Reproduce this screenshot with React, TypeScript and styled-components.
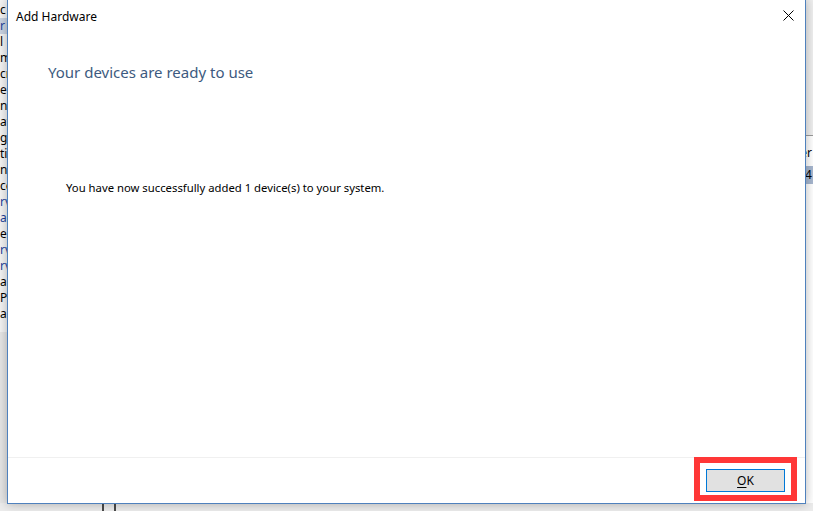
import React from 'react';
import styled, { createGlobalStyle } from 'styled-components';

const GlobalStyle = createGlobalStyle`
	html, body {
		margin: 0;
		padding: 0;
		width: 813px;
		height: 511px;
		overflow: hidden;
		background: #e6e6e6;
		font-family: 'Noto Sans', 'Open Sans', 'Liberation Sans', sans-serif;
	}
`;

const listRows = [
	{ text: 'c', color: '#000' },
	{ text: 'r', color: '#1b3f9b', selected: true },
	{ text: 'l', color: '#000' },
	{ text: 'm', color: '#000' },
	{ text: 'cr', color: '#000' },
	{ text: 'er', color: '#000' },
	{ text: 'ne', color: '#000' },
	{ text: 'at', color: '#000' },
	{ text: 'g', color: '#000' },
	{ text: 'ti', color: '#000' },
	{ text: 'ni', color: '#000' },
	{ text: 'ce', color: '#000' },
	{ text: 'rv', color: '#1b3f9b' },
	{ text: 'as', color: '#1b3f9b' },
	{ text: 'e', color: '#000' },
	{ text: 'rv', color: '#1b3f9b' },
	{ text: 'rv', color: '#1b3f9b' },
	{ text: 'ar', color: '#000' },
	{ text: 'P', color: '#000' },
	{ text: 'ar', color: '#000' }
];

export default function App() {
	return (
		<Desktop>
			<GlobalStyle />

			<LeftWindow>
				{listRows.map((row, i) => (
					<ListRow key={i} selected={row.selected} color={row.color}>
						{row.text}
					</ListRow>
				))}
			</LeftWindow>

			<RightWindow>
				<RightHeader />
				<RightRow>Header</RightRow>
				<RightRow selected>1274</RightRow>
			</RightWindow>

			<BottomStrip>
				<StripLine />
				<StripLine />
			</BottomStrip>

			<Dialog>
				<TitleBar>
					<Title>Add Hardware</Title>
					<CloseButton aria-label="Close">
						<svg width="11" height="11" viewBox="0 0 11 11">
							<path d="M0.5 0.5 L10.5 10.5 M10.5 0.5 L0.5 10.5" stroke="#000" strokeWidth="1" fill="none" />
						</svg>
					</CloseButton>
				</TitleBar>

				<Content>
					<Heading>Your devices are ready to use</Heading>
					<Message>You have now successfully added 1 device(s) to your system.</Message>
				</Content>

				<Footer>
					<Highlight>
						<OkButton>
							<u>O</u>K
						</OkButton>
					</Highlight>
				</Footer>
			</Dialog>
		</Desktop>
	);
}

const Desktop = styled.div`
	position: relative;
	width: 813px;
	height: 511px;
	overflow: hidden;
	background: #e6e6e6;
`;

const LeftWindow = styled.div`
	position: absolute;
	left: 0;
	top: 0;
	width: 40px;
	height: 330px;
	background: #f4f4f4;
	display: flex;
	flex-direction: column;
	padding-top: 2px;
`;

const ListRow = styled.div<{ selected?: boolean; color: string }>`
	height: 16px;
	line-height: 16px;
	font-size: 12px;
	color: ${p => p.color};
	background: ${p => (p.selected ? '#c9d3e2' : 'transparent')};
	white-space: nowrap;
`;

const RightWindow = styled.div`
	position: absolute;
	left: 750px;
	top: 0;
	width: 63px;
	height: 511px;
	background: #ffffff;
	display: flex;
	flex-direction: column;
`;

const RightHeader = styled.div`
	height: 135px;
	background: #efefef;
	border-bottom: 1px solid #9a9a9a;
	margin-bottom: 8px;
`;

const RightRow = styled.div<{ selected?: boolean }>`
	height: 18px;
	line-height: 18px;
	font-size: 12px;
	color: #000;
	text-align: right;
	padding-right: 1px;
	white-space: nowrap;
	background: ${p => (p.selected ? '#a7b7cf' : 'transparent')};
	margin-top: ${p => (p.selected ? '4px' : '0')};
`;

const BottomStrip = styled.div`
	position: absolute;
	left: 0;
	top: 503px;
	width: 813px;
	height: 8px;
	background: #ececec;
	display: flex;
	gap: 10px;
	padding-left: 102px;
	box-sizing: border-box;
`;

const StripLine = styled.div`
	width: 2px;
	height: 8px;
	background: #4a4a4a;
`;

const Dialog = styled.div`
	position: absolute;
	left: 7px;
	top: -1px;
	width: 799px;
	height: 505px;
	box-sizing: border-box;
	background: #ffffff;
	border: 1px solid #4f81bd;
	box-shadow: 0 0 10px rgba(0, 0, 0, 0.28);
	display: flex;
	flex-direction: column;
`;

const TitleBar = styled.div`
	height: 32px;
	flex: none;
	display: flex;
	align-items: center;
	justify-content: space-between;
	padding-left: 8px;
	padding-right: 2px;
`;

const Title = styled.div`
	font-size: 12px;
	color: #000;
	padding-top: 1px;
`;

const CloseButton = styled.div`
	width: 30px;
	height: 30px;
	display: flex;
	align-items: center;
	justify-content: center;
	margin-top: -1px;
`;

const Content = styled.div`
	flex: 1;
	display: flex;
	flex-direction: column;
	padding: 30px 0 0 40px;
`;

const Heading = styled.div`
	font-size: 15px;
	color: #3d5a80;
	line-height: 20px;
`;

const Message = styled.div`
	font-size: 11.3px;
	color: #000;
	margin-top: 98px;
	margin-left: 18px;
	line-height: 16px;
`;

const Footer = styled.div`
	height: 45px;
	flex: none;
	border-top: 1px solid #f0f0f0;
	display: flex;
	justify-content: flex-end;
	align-items: flex-start;
	padding-right: 8px;
`;

const Highlight = styled.div`
	width: 103px;
	height: 44px;
	box-sizing: border-box;
	border: 6px solid #ff3737;
	display: flex;
	align-items: center;
	justify-content: center;
	margin-top: -1px;
`;

const OkButton = styled.div`
	width: 79px;
	height: 23px;
	box-sizing: border-box;
	background: #e1e1e1;
	border: 1px solid #0078d7;
	font-size: 12px;
	color: #000;
	display: flex;
	align-items: center;
	justify-content: center;
	margin-top: 2px;

	u {
		text-decoration-thickness: 1px;
		text-underline-offset: 2px;
	}
`;
